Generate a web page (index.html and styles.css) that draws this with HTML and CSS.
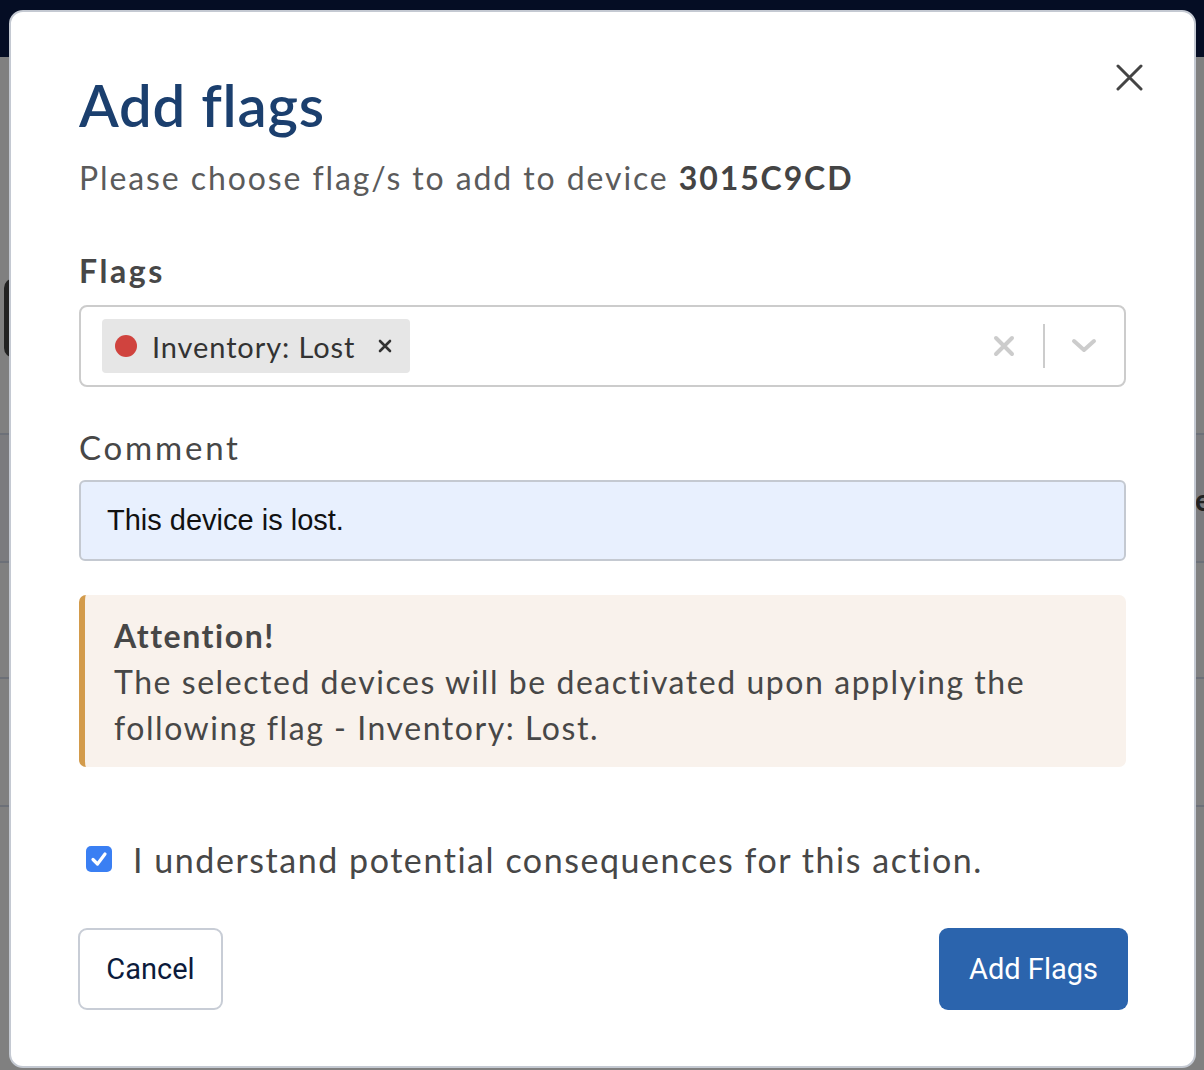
FILE: index.html
```html
<!DOCTYPE html>
<html lang="en">
<head>
    <meta charset="UTF-8">
    <meta name="viewport" content="width=device-width, initial-scale=1.0">
    <title>Add flags</title>
    <link rel="stylesheet" href="styles.css">
</head>
<body>
    <!-- page behind the dialog, dimmed by the overlay -->
    <div class="page">
        <div class="topbar"></div>
        <div class="content">
            <div class="toolbar">
                <span class="toolbar-btn"></span>
            </div>
            <div class="row row-tall row-active"><span class="cell-text">e</span></div>
            <div class="row row-short"></div>
            <div class="row row-tall"></div>
            <div class="row row-tall"></div>
        </div>
    </div>

    <div class="modal" role="dialog">
        <button class="close-btn" aria-label="Close">
            <svg width="27" height="27" viewBox="0 0 27 27">
                <path d="M2 2 L25 25 M25 2 L2 25" stroke="#444" stroke-width="3" stroke-linecap="round" fill="none"/>
            </svg>
        </button>

        <h1 class="title">Add flags</h1>
        <p class="subtitle">Please choose flag/s to add to device <strong>3015C9CD</strong></p>

        <label class="label label-bold">Flags</label>
        <div class="select">
            <div class="chips">
                <span class="chip">
                    <span class="dot"></span>
                    <span class="chip-text">Inventory: Lost</span>
                    <svg class="chip-remove" width="14" height="14" viewBox="0 0 14 14">
                        <path d="M2 2 L12 12 M12 2 L2 12" stroke="#333" stroke-width="2.6" stroke-linecap="round"/>
                    </svg>
                </span>
            </div>
            <div class="indicators">
                <svg class="clear" width="22" height="22" viewBox="0 0 22 22">
                    <path d="M3 3 L19 19 M19 3 L3 19" stroke="#cccccc" stroke-width="4" stroke-linecap="round"/>
                </svg>
                <span class="separator"></span>
                <svg class="chevron" width="26" height="16" viewBox="0 0 26 16">
                    <path d="M3 3 L13 12 L23 3" stroke="#cccccc" stroke-width="4" stroke-linecap="round" stroke-linejoin="round" fill="none"/>
                </svg>
            </div>
        </div>

        <label class="label">Comment</label>
        <input class="input" type="text" value="This device is lost.">

        <div class="alert">
            <strong>Attention!</strong><br>
            The selected devices will be deactivated upon applying the following flag - Inventory: Lost.
        </div>

        <div class="confirm">
            <span class="checkbox">
                <svg width="20" height="20" viewBox="0 0 20 20">
                    <path d="M4 10.5 L8.5 15 L16 5" stroke="#fff" stroke-width="3.2" stroke-linecap="round" stroke-linejoin="round" fill="none"/>
                </svg>
            </span>
            <span class="confirm-text">I understand potential consequences for this action.</span>
        </div>

        <div class="actions">
            <button class="btn btn-secondary">Cancel</button>
            <button class="btn btn-primary">Add Flags</button>
        </div>
    </div>
</body>
</html>
```

FILE: styles.css
```css
body {
    margin: 0;
    font-family: Lato, "Open Sans", sans-serif;
    background-color: #808080;
    overflow: hidden;
}

/* dimmed page behind */
.page {
    height: 1070px;
}

.topbar {
    height: 57px;
    background-color: #050d24;
}

.content {
    background-color: #808080;
}

.toolbar {
    height: 376px;
    padding-top: 221px;
    box-sizing: border-box;
}

.toolbar-btn {
    display: block;
    margin-left: 4px;
    width: 120px;
    height: 80px;
    border-radius: 10px;
    background-color: #222;
}

.row {
    border-top: 2px solid #6c7078;
    box-sizing: border-box;
    position: relative;
}

.row-tall {
    height: 128px;
}

.row-short {
    height: 116px;
}

.row-active {
    background-color: #7b7b7e;
}

.cell-text {
    position: absolute;
    left: 1195px;
    top: 46px;
    font-size: 30px;
    font-weight: bold;
    color: #222;
}

/* dialog */
.modal {
    position: absolute;
    left: 9px;
    top: 10px;
    width: 1187px;
    height: 1058px;
    box-sizing: border-box;
    background: #fff;
    border: 2px solid #c4c9d2;
    border-radius: 14px;
    padding: 58px 68px 0;
}

.close-btn {
    position: absolute;
    top: 52px;
    right: 51px;
    padding: 0;
    border: none;
    background: none;
    cursor: pointer;
    display: flex;
}

.title {
    margin: 0;
    font-size: 58px;
    line-height: 70px;
    font-weight: 600;
    letter-spacing: 0.8px;
    color: #1b3f6e;
}

.subtitle {
    margin: 18px 0 0;
    font-size: 32px;
    line-height: 40px;
    letter-spacing: 1.9px;
    color: #5b5b5b;
}

.subtitle strong {
    color: #444;
}

.label {
    display: block;
    margin-top: 40px;
    font-size: 33px;
    line-height: 40px;
    letter-spacing: 2.8px;
    color: #474747;
}

.label-bold {
    margin-top: 53px;
    font-size: 32px;
    letter-spacing: 2.6px;
    font-weight: bold;
}

.select {
    margin-top: 14px;
    height: 82px;
    box-sizing: border-box;
    border: 2px solid #cccccc;
    border-radius: 8px;
    padding: 12px 0 12px 21px;
    display: flex;
    align-items: center;
}

.chips {
    flex: 1;
    display: flex;
}

.chip {
    display: flex;
    align-items: center;
    height: 54px;
    padding: 0 18px 0 13px;
    background-color: #e6e6e6;
    border-radius: 4px;
}

.dot {
    width: 22px;
    height: 22px;
    border-radius: 50%;
    background-color: #d0433e;
}

.chip-text {
    margin-left: 15px;
    font-size: 29px;
    letter-spacing: 0.9px;
    color: #333;
}

.chip-remove {
    margin-left: 23px;
}

.indicators {
    display: flex;
    align-items: center;
    height: 100%;
}

.clear {
    margin-right: 28px;
}

.separator {
    width: 2px;
    height: 44px;
    background-color: #cccccc;
}

.chevron {
    margin: 0 27px 0 26px;
}

.input {
    display: block;
    width: 100%;
    margin-top: 13px;
    height: 81px;
    box-sizing: border-box;
    border: 2px solid #c4c9d1;
    border-radius: 6px;
    background-color: #e8f0fe;
    padding: 0 26px;
    font-family: "Liberation Sans", Arial, sans-serif;
    font-size: 29px;
    color: #111;
    outline: none;
}

.alert {
    margin-top: 34px;
    padding: 18px 30px 16px 29px;
    background-color: #f9f2ec;
    border-left: 6px solid #d39b4b;
    border-radius: 7px;
    font-size: 32px;
    line-height: 46px;
    letter-spacing: 1.55px;
    color: #474747;
}

.confirm {
    margin-top: 70px;
    display: flex;
    align-items: center;
    height: 44px;
}

.checkbox {
    margin-left: 7px;
    width: 26px;
    height: 26px;
    border-radius: 5px;
    background-color: #3a7ff3;
    display: flex;
    align-items: center;
    justify-content: center;
}

.confirm-text {
    margin-left: 21px;
    font-size: 34px;
    letter-spacing: 1.55px;
    color: #474747;
}

.actions {
    margin: 47px -2px 0 -1px;
    display: flex;
    justify-content: space-between;
}

.btn {
    height: 82px;
    border-radius: 9px;
    font-family: Roboto, sans-serif;
    font-size: 29px;
    cursor: pointer;
}

.btn-secondary {
    width: 145px;
    background: #fff;
    border: 2px solid #c8cdd6;
    color: #0b1b3b;
}

.btn-primary {
    width: 189px;
    background-color: #2b64ad;
    border: none;
    color: #fff;
}
```
